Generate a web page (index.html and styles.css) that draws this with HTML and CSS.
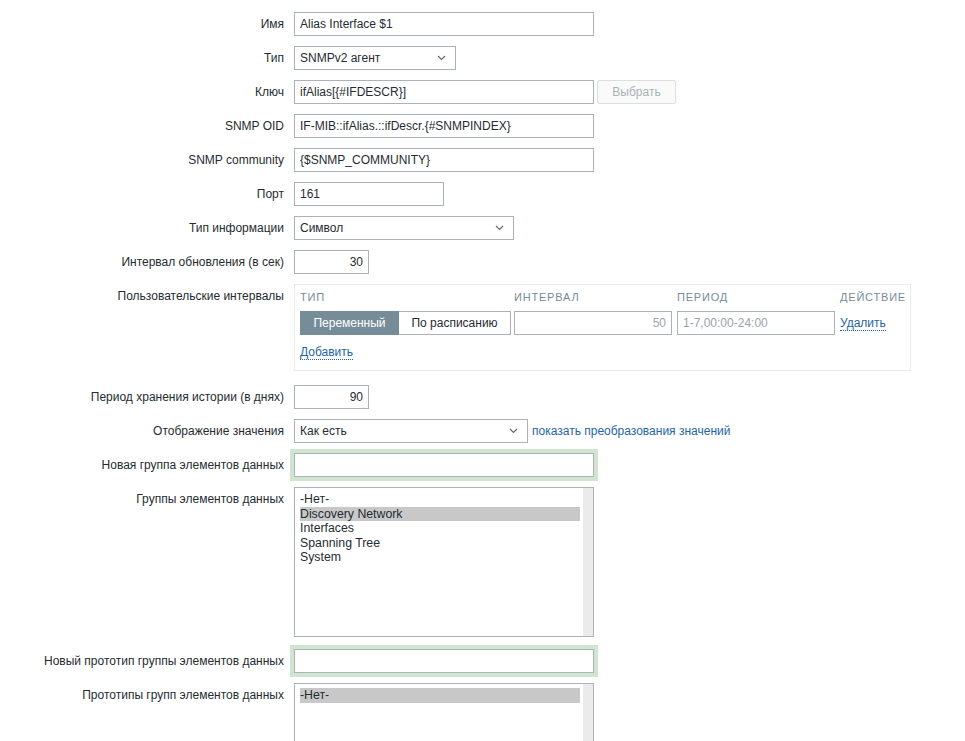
FILE: index.html
```html
<!DOCTYPE html>
<html lang="ru">
<head>
<meta charset="utf-8">
<title>Элемент данных</title>
<link rel="stylesheet" href="styles.css">
</head>
<body>
<div class="form">
  <div class="row">
    <div class="lbl">Имя</div>
    <div class="field"><input class="inp w300" value="Alias Interface $1"></div>
  </div>
  <div class="row">
    <div class="lbl">Тип</div>
    <div class="field"><div class="sel w162"><span>SNMPv2 агент</span><svg class="chev" width="9" height="6" viewBox="0 0 9 6"><path d="M1 1l3.5 3.5L8 1" fill="none" stroke="#6b6b6b" stroke-width="1.2"/></svg></div></div>
  </div>
  <div class="row">
    <div class="lbl">Ключ</div>
    <div class="field"><input class="inp w300" value="ifAlias[{#IFDESCR}]"><button class="btn-dis">Выбрать</button></div>
  </div>
  <div class="row">
    <div class="lbl">SNMP OID</div>
    <div class="field"><input class="inp w300" value="IF-MIB::ifAlias.::ifDescr.{#SNMPINDEX}"></div>
  </div>
  <div class="row">
    <div class="lbl">SNMP community</div>
    <div class="field"><input class="inp w300" value="{$SNMP_COMMUNITY}"></div>
  </div>
  <div class="row">
    <div class="lbl">Порт</div>
    <div class="field"><input class="inp w150" value="161"></div>
  </div>
  <div class="row">
    <div class="lbl">Тип информации</div>
    <div class="field"><div class="sel w220"><span>Символ</span><svg class="chev" width="9" height="6" viewBox="0 0 9 6"><path d="M1 1l3.5 3.5L8 1" fill="none" stroke="#6b6b6b" stroke-width="1.2"/></svg></div></div>
  </div>
  <div class="row">
    <div class="lbl">Интервал обновления (в сек)</div>
    <div class="field"><input class="inp w75 num" value="30"></div>
  </div>
  <div class="row row-intervals">
    <div class="lbl">Пользовательские интервалы</div>
    <div class="field">
      <div class="intervals">
        <div class="igrid">
          <div class="ih">Тип</div>
          <div class="ih">Интервал</div>
          <div class="ih">Период</div>
          <div class="ih">Действие</div>
          <div class="seg"><span class="seg-on">Переменный</span><span class="seg-off">По расписанию</span></div>
          <div><input class="inp w158 num dim" value="50"></div>
          <div><input class="inp w158 dim" value="1-7,00:00-24:00"></div>
          <div class="act"><a class="dlink">Удалить</a></div>
        </div>
        <div class="add"><a class="dlink">Добавить</a></div>
      </div>
    </div>
  </div>
  <div class="row">
    <div class="lbl">Период хранения истории (в днях)</div>
    <div class="field"><input class="inp w75 num" value="90"></div>
  </div>
  <div class="row">
    <div class="lbl">Отображение значения</div>
    <div class="field"><div class="sel w234"><span>Как есть</span><svg class="chev" width="9" height="6" viewBox="0 0 9 6"><path d="M1 1l3.5 3.5L8 1" fill="none" stroke="#6b6b6b" stroke-width="1.2"/></svg></div><a class="link">показать преобразования значений</a></div>
  </div>
  <div class="row">
    <div class="lbl">Новая группа элементов данных</div>
    <div class="field"><input class="inp w300 glow" value=""></div>
  </div>
  <div class="row row-list">
    <div class="lbl">Группы элементов данных</div>
    <div class="field">
      <div class="listbox h150">
        <div class="opts">
          <div class="opt">-Нет-</div>
          <div class="opt on">Discovery Network</div>
          <div class="opt">Interfaces</div>
          <div class="opt">Spanning Tree</div>
          <div class="opt">System</div>
        </div>
        <div class="sbar"></div>
      </div>
    </div>
  </div>
  <div class="row">
    <div class="lbl">Новый прототип группы элементов данных</div>
    <div class="field"><input class="inp w300 glow" value=""></div>
  </div>
  <div class="row">
    <div class="lbl">Прототипы групп элементов данных</div>
    <div class="field">
      <div class="listbox h150">
        <div class="opts">
          <div class="opt on">-Нет-</div>
        </div>
        <div class="sbar"></div>
      </div>
    </div>
  </div>
</div>
</body>
</html>
```

FILE: styles.css
```css
html, body {
  margin: 0;
  padding: 0;
  background: #ffffff;
}
body {
  font-family: "Liberation Sans", Arial, sans-serif;
  font-size: 12px;
  color: #1f2c33;
}
.form {
  padding-top: 12px;
  display: flex;
  flex-direction: column;
  gap: 10px;
}
.row {
  display: flex;
  align-items: flex-start;
  gap: 10px;
}
.lbl {
  width: 284px;
  flex: none;
  text-align: right;
  line-height: 24px;
  white-space: nowrap;
}
.field {
  display: flex;
  align-items: center;
  gap: 3px;
}
.inp {
  box-sizing: border-box;
  height: 24px;
  border: 1px solid #acb3b7;
  padding: 0 5px;
  margin: 0;
  font-family: "Liberation Sans", Arial, sans-serif;
  font-size: 12px;
  color: #1f2c33;
  background: #fff;
  outline: none;
  border-radius: 0;
}
.w300 { width: 300px; }
.w150 { width: 150px; }
.w75 { width: 75px; }
.w158 { width: 158px; }
.num { text-align: right; }
.dim { color: #9aa4a9; }
.glow { box-shadow: 0 0 0 4px #cfe5cf; }
.btn-dis {
  box-sizing: border-box;
  width: 79px;
  height: 24px;
  border: 1px solid #dcdfe0;
  background: #fafafa;
  color: #a9b2b6;
  font-family: "Liberation Sans", Arial, sans-serif;
  font-size: 12px;
  padding: 0;
  margin: 0;
  border-radius: 2px;
}
.sel {
  box-sizing: border-box;
  height: 24px;
  border: 1px solid #acb3b7;
  padding: 0 9px 0 5px;
  display: flex;
  align-items: center;
  justify-content: space-between;
  background: #fff;
}
.w162 { width: 162px; }
.w220 { width: 220px; }
.w234 { width: 234px; }
.chev { display: block; }
.link {
  color: #1f65a6;
  margin-left: 1px;
  white-space: nowrap;
}
.intervals {
  box-sizing: border-box;
  width: 617px;
  border: 1px solid #ebebeb;
  padding: 5px 5px 11px 5px;
  margin-bottom: 4px;
}
.igrid {
  display: grid;
  grid-template-columns: 214px 163px 163px auto;
  align-items: center;
}
.ih {
  text-transform: uppercase;
  font-size: 11px;
  letter-spacing: 0.8px;
  color: #768d99;
  line-height: 14px;
  padding-bottom: 7px;
}
.seg {
  display: flex;
  height: 24px;
  width: 211px;
  box-sizing: border-box;
}
.seg-on {
  width: 99px;
  background: #768d99;
  color: #ffffff;
  display: flex;
  align-items: center;
  justify-content: center;
}
.seg-off {
  flex: 1;
  box-sizing: border-box;
  border: 1px solid #acb3b7;
  border-left: none;
  display: flex;
  align-items: center;
  justify-content: center;
}
.act { line-height: 14px; }
.dlink {
  color: #1f65a6;
  border-bottom: 1px dotted #1f65a6;
}
.add {
  padding-top: 10px;
  line-height: 14px;
}
.row-list { margin-bottom: 2px; }
.listbox {
  box-sizing: border-box;
  width: 300px;
  border: 1px solid #acb3b7;
  display: flex;
  background: #fff;
}
.h150 { height: 150px; }
.opts {
  flex: 1;
  padding: 4px 3px 0 5px;
  font-size: 12.3px;
}
.opt {
  line-height: 14.5px;
  height: 14.5px;
  white-space: nowrap;
}
.opt.on { background: #c8c8c8; }
.sbar {
  width: 10px;
  background: #ebebeb;
  flex: none;
}
```
